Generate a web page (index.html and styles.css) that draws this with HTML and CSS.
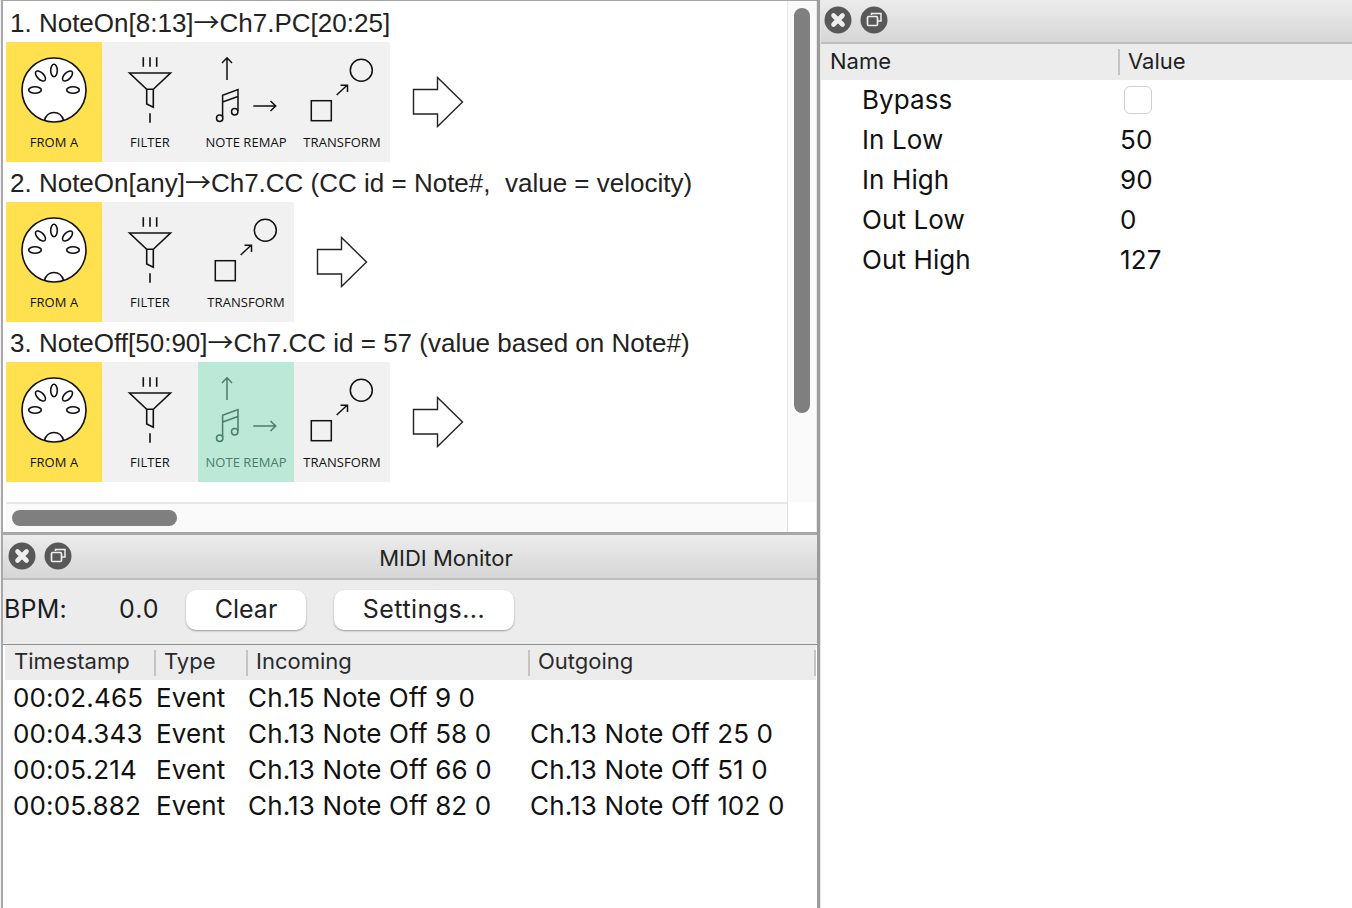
FILE: index.html
```html
<!DOCTYPE html>
<html lang="en">
<head>
<meta charset="utf-8">
<title>MIDI Monitor</title>
<link rel="stylesheet" href="styles.css">
</head>
<body>
<svg class="defs" width="0" height="0" aria-hidden="true">
  <symbol id="i-midi" viewBox="0 0 96 90">
    <g fill="none" stroke="currentColor" stroke-width="1.6">
      <circle cx="48" cy="48" r="32" fill="#fff"/>
      <ellipse cx="48" cy="28.5" rx="3.3" ry="6.3"/>
      <ellipse cx="34.5" cy="34" rx="3.3" ry="6.3" transform="rotate(-45 34.5 34)"/>
      <ellipse cx="61.5" cy="34" rx="3.3" ry="6.3" transform="rotate(45 61.5 34)"/>
      <ellipse cx="29" cy="48" rx="6.3" ry="3.3"/>
      <ellipse cx="67" cy="48" rx="6.3" ry="3.3"/>
      <path d="M38.3 78.5 C40 73 44 70.5 48 70.5 C52 70.5 56 73 57.7 78.5"/>
    </g>
  </symbol>
  <symbol id="i-filter" viewBox="0 0 96 90">
    <g fill="none" stroke="currentColor" stroke-width="1.6">
      <path d="M41.3 15.3V24.7M48 15.3V24.7M54.7 15.3V24.7M48 71.3V80.7"/>
      <path d="M27.5 31H68.5L51.3 47.3H44.7Z"/>
      <path d="M44.7 47.3V62L51.3 65.3V47.3"/>
    </g>
  </symbol>
  <symbol id="i-remap" viewBox="0 0 96 90">
    <g fill="none" stroke="currentColor" stroke-width="1.5">
      <path d="M29 38V16M24 21L29 15.8L34 21"/>
      <circle cx="21.7" cy="76.3" r="3.2"/>
      <circle cx="36.7" cy="69.7" r="3.2"/>
      <path d="M24.6 75V53.2L40 47.5V69M24.6 60L40 54.5"/>
      <path d="M55.3 64H77.5M72.5 59L77.7 64L72.5 69"/>
    </g>
  </symbol>
  <symbol id="i-transform" viewBox="0 0 96 90">
    <g fill="none" stroke="currentColor" stroke-width="1.5">
      <circle cx="67.3" cy="28.3" r="11"/>
      <rect x="17.3" y="58.7" width="20" height="20"/>
      <path d="M42.7 53L53.3 43M46.5 43.3H53.5V50"/>
    </g>
  </symbol>
  <symbol id="i-next" viewBox="0 0 52 52">
    <path d="M1.5 13.5H25.5V1.5L50.5 26L25.5 50.5V38H1.5Z" fill="#fff" stroke="#222" stroke-width="1.4"/>
  </symbol>
  <symbol id="i-close" viewBox="0 0 28 28">
    <circle cx="14" cy="14" r="13.5" fill="#585858"/>
    <path d="M9.5 9.5L18.5 18.5M18.5 9.5L9.5 18.5" stroke="#eee" stroke-width="4.6" stroke-linecap="round"/>
  </symbol>
  <symbol id="i-restore" viewBox="0 0 28 28">
    <circle cx="14" cy="14" r="13.5" fill="#585858"/>
    <path d="M11.5 9V7.5H21V15H18" fill="none" stroke="#eee" stroke-width="1.5"/>
    <rect x="7.5" y="10.5" width="10" height="9" rx="1.2" fill="#585858" stroke="#eee" stroke-width="1.7"/>
  </symbol>
</svg>

<div class="app">
  <div class="left">
    <section class="chain-panel">
      <div class="chain-pane">
        <div class="chain">
          <h2 class="chain-title">1. NoteOn[8:13]<span class="arrow">→</span>Ch7.PC[20:25]</h2>
          <div class="strip">
            <div class="tile tile-source"><svg class="tile-icon"><use href="#i-midi"/></svg><span class="tile-label">FROM A</span></div>
            <div class="tile"><svg class="tile-icon"><use href="#i-filter"/></svg><span class="tile-label">FILTER</span></div>
            <div class="tile"><svg class="tile-icon"><use href="#i-remap"/></svg><span class="tile-label">NOTE REMAP</span></div>
            <div class="tile"><svg class="tile-icon"><use href="#i-transform"/></svg><span class="tile-label">TRANSFORM</span></div>
            <svg class="next-arrow"><use href="#i-next"/></svg>
          </div>
        </div>
        <div class="chain">
          <h2 class="chain-title">2. NoteOn[any]<span class="arrow">→</span>Ch7.CC (CC id = Note#,&nbsp; value = velocity)</h2>
          <div class="strip">
            <div class="tile tile-source"><svg class="tile-icon"><use href="#i-midi"/></svg><span class="tile-label">FROM A</span></div>
            <div class="tile"><svg class="tile-icon"><use href="#i-filter"/></svg><span class="tile-label">FILTER</span></div>
            <div class="tile"><svg class="tile-icon"><use href="#i-transform"/></svg><span class="tile-label">TRANSFORM</span></div>
            <svg class="next-arrow"><use href="#i-next"/></svg>
          </div>
        </div>
        <div class="chain">
          <h2 class="chain-title">3. NoteOff[50:90]<span class="arrow">→</span>Ch7.CC id = 57 (value based on Note#)</h2>
          <div class="strip">
            <div class="tile tile-source"><svg class="tile-icon"><use href="#i-midi"/></svg><span class="tile-label">FROM A</span></div>
            <div class="tile"><svg class="tile-icon"><use href="#i-filter"/></svg><span class="tile-label">FILTER</span></div>
            <div class="tile tile-active"><svg class="tile-icon"><use href="#i-remap"/></svg><span class="tile-label">NOTE REMAP</span></div>
            <div class="tile"><svg class="tile-icon"><use href="#i-transform"/></svg><span class="tile-label">TRANSFORM</span></div>
            <svg class="next-arrow"><use href="#i-next"/></svg>
          </div>
        </div>
      </div>
      <div class="vscroll"><div class="vthumb"></div></div>
      <div class="hscroll"><div class="hthumb"></div></div>
      <div class="scroll-corner"></div>
    </section>

    <section class="monitor">
      <header class="titlebar monitor-bar">
        <svg class="win-btn"><use href="#i-close"/></svg>
        <svg class="win-btn"><use href="#i-restore"/></svg>
        <span class="monitor-title">MIDI Monitor</span>
      </header>
      <div class="toolbar">
        <span class="bpm-label">BPM:</span>
        <span class="bpm-value">0.0</span>
        <button class="btn btn-clear">Clear</button>
        <button class="btn btn-settings">Settings...</button>
      </div>
      <div class="log">
        <div class="log-head">
          <span class="log-h">Timestamp</span>
          <span class="log-h">Type</span>
          <span class="log-h">Incoming</span>
          <span class="log-h">Outgoing</span>
        </div>
        <div class="log-row"><span>00:02.465</span><span>Event</span><span>Ch.15 Note Off 9 0</span><span></span></div>
        <div class="log-row"><span>00:04.343</span><span>Event</span><span>Ch.13 Note Off 58 0</span><span>Ch.13 Note Off 25 0</span></div>
        <div class="log-row"><span>00:05.214</span><span>Event</span><span>Ch.13 Note Off 66 0</span><span>Ch.13 Note Off 51 0</span></div>
        <div class="log-row"><span>00:05.882</span><span>Event</span><span>Ch.13 Note Off 82 0</span><span>Ch.13 Note Off 102 0</span></div>
      </div>
    </section>
  </div>

  <aside class="params">
    <header class="titlebar params-bar">
      <svg class="win-btn"><use href="#i-close"/></svg>
      <svg class="win-btn"><use href="#i-restore"/></svg>
    </header>
    <div class="param-head">
      <span class="param-h">Name</span>
      <span class="param-h param-h-value">Value</span>
    </div>
    <div class="param-row"><span>Bypass</span><span class="check"></span></div>
    <div class="param-row"><span>In Low</span><span>50</span></div>
    <div class="param-row"><span>In High</span><span>90</span></div>
    <div class="param-row"><span>Out Low</span><span>0</span></div>
    <div class="param-row"><span>Out High</span><span>127</span></div>
  </aside>
</div>
</body>
</html>
```
FILE: styles.css
```css
* { box-sizing: border-box; }
html, body { margin: 0; height: 100%; overflow: hidden; }
body {
  background: #fff;
  font-family: Inter, "Liberation Sans", sans-serif;
  color: #1c1c1c;
}
.defs { position: absolute; }

.app {
  display: grid;
  grid-template-columns: 820px 1fr;
  width: 1352px;
  height: 908px;
}

/* left column */
.left {
  display: grid;
  grid-template-rows: 535px 1fr;
  border-right: 3px solid #9c9c9c;
  padding-left: 1px;
  background: #f2f2f2;
  height: 908px;
  min-width: 0;
}

.chain-panel {
  display: grid;
  grid-template-columns: 1fr 30px;
  grid-template-rows: 1fr 30px;
  background: #fff;
  border-top: 1px solid #a4a4a4;
  border-bottom: 3px solid #a8a8a8;
  border-left: 2px solid #a8a8a8;
  padding-left: 3px;
}
.chain-pane { padding-top: 1px; overflow: hidden; }
.chain-title {
  margin: 0;
  height: 40px;
  padding: 2px 0 0 4px;
  font: 400 26px/38px "Liberation Sans", Arial, sans-serif;
  color: #222;
  white-space: nowrap;
  overflow: hidden;
}
.arrow {
  font-family: "Noto Sans CJK JP", "DejaVu Sans", sans-serif;
  line-height: 1;
}
.strip { display: flex; align-items: center; height: 120px; }
.tile {
  display: flex;
  flex-direction: column;
  align-items: center;
  width: 96px;
  height: 120px;
  background: #f1f1f1;
  color: #111;
}
.tile-source { background: #ffe14f; }
.tile-active { background: #bce8d7; color: #4a7d6b; }
.tile-icon { display: block; width: 96px; height: 90px; }
.tile-label {
  font: 400 13px/20px "Open Sans", sans-serif;
  letter-spacing: .05px;
  white-space: nowrap;
}
.next-arrow { width: 52px; height: 52px; margin-left: 22px; }

.vscroll {
  grid-column: 2;
  grid-row: 1;
  background: #fafafa;
  border-left: 1px solid #e8e8e8;
  border-right: 1px solid #e8e8e8;
  padding: 7px 6px 0 6px;
}
.vthumb { height: 405px; width: 16px; border-radius: 8px; background: #7f7f7f; }
.hscroll {
  grid-column: 1;
  grid-row: 2;
  background: #fafafa;
  border-top: 2px solid #e8e8e8;
  padding: 6px 0 0 6px;
}
.hthumb { width: 165px; height: 16px; border-radius: 8px; background: #7f7f7f; }
.scroll-corner { grid-column: 2; grid-row: 2; background: #fff; border-left: 1px solid #e0e0e0; border-right: 1px solid #e8e8e8; }

/* title bars */
.titlebar {
  display: flex;
  align-items: center;
  gap: 8px;
  background: linear-gradient(#ececec, #d6d6d6);
  border-bottom: 2px solid #bdbdbd;
}
.win-btn { width: 28px; height: 28px; flex: none; }

/* monitor */
.monitor {
  display: flex;
  flex-direction: column;
  background: #fff;
  border-left: 2px solid #a8a8a8;
  min-height: 0;
}
.monitor-bar {
  height: 45px;
  padding: 0 0 1px 5px;
}
.monitor-title {
  flex: 1;
  padding: 4px 5px 0 0;
  text-align: center;
  font-size: 22px;
  color: #222;
}
.toolbar {
  display: flex;
  align-items: center;
  height: 65px;
  background: #ececec;
  border-bottom: 1px solid #8f8f8f;
  font-size: 25px;
  padding: 0 0 5px 1px;
}
.bpm-label { width: 115px; letter-spacing: .2px; padding-bottom: 2px; }
.bpm-value { width: 67px; letter-spacing: 1px; padding-bottom: 2px; }
.btn {
  height: 40px;
  padding: 0 0 2px;
  border: 0;
  border-radius: 10px;
  background: #fff;
  box-shadow: 0 1px 2px rgba(0,0,0,.35);
  font: inherit;
  color: #222;
}
.btn-clear { width: 120px; margin-right: 28px; }
.btn-settings { width: 180px; letter-spacing: .45px; }

.log { flex: 1; background: #fff; margin-left: 2px; }
.log-head {
  display: grid;
  grid-template-columns: 151px 92px 282px 1fr;
  height: 35px;
  align-items: center;
  background: #ececec;
  font-size: 22px;
  color: #2a2a2a;
  margin-right: 1px;
}
.log-h {
  height: 26px;
  line-height: 23px;
  padding-left: 8px;
  border-right: 2px solid #c4c4c4;
  white-space: nowrap;
}
.log-h:first-child { padding-left: 9px; }
.log-row {
  display: grid;
  grid-template-columns: 143px 92px 282px 1fr;
  height: 36px;
  line-height: 36px;
  padding-left: 8px;
  font-size: 26px;
  letter-spacing: .15px;
  color: #111;
  white-space: nowrap;
}

/* parameter panel */
.params { display: flex; flex-direction: column; background: #fff; border-left: 1px solid #e4e4e4; }
.params-bar { height: 44px; padding: 0 0 2px 3px; }
.param-head {
  display: grid;
  grid-template-columns: 297px 1fr;
  height: 36px;
  align-items: center;
  background: #ececec;
  font-size: 22px;
  color: #1f1f1f;
}
.param-h { padding-left: 9px; white-space: nowrap; line-height: 24px; height: 26px; }
.param-h-value { border-left: 2px solid #c4c4c4; padding-left: 8px; }
.param-row {
  display: grid;
  grid-template-columns: 258px 1fr;
  align-items: center;
  height: 40px;
  padding: 0 0 2px 41px;
  font-size: 26px;
  letter-spacing: .1px;
  color: #111;
}
.check {
  display: block;
  width: 28px;
  height: 28px;
  margin: 2px 0 0 4px;
  background: #fff;
  border: 1px solid #cfcfcf;
  border-radius: 6px;
}
```
